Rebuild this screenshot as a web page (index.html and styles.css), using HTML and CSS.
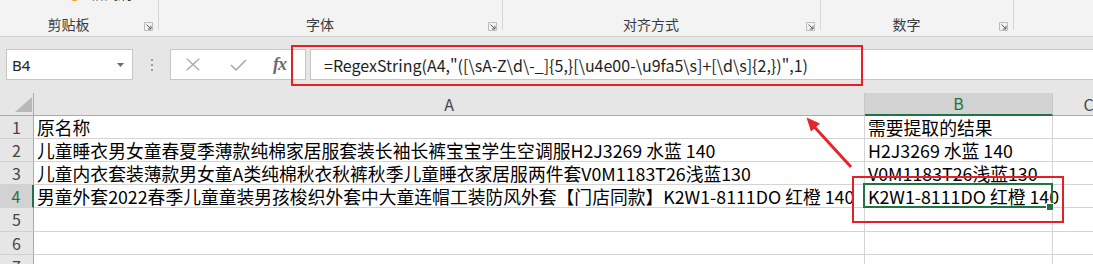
FILE: index.html
```html
<!DOCTYPE html>
<html lang="zh-CN">
<head>
<meta charset="utf-8">
<title>Excel RegexString</title>
<link rel="stylesheet" href="styles.css">
</head>
<body>
<div class="app">
  <div class="ribbon">
    <div class="group g1">
      <div class="clip"><span class="brush"></span><span class="cut">格式刷</span></div>
      <div class="lrow"><div class="glabel">剪贴板</div><svg class="launch" viewBox="0 0 9 9"><path d="M0.5 8.5V0.5H8.5V8.5Z" fill="none" stroke="#bdbdbd"/><path d="M2.5 2.5L7 7M7 3.8V7H3.8" fill="none" stroke="#5f5f5f" stroke-width="1"/></svg></div>
    </div>
    <div class="sep"></div>
    <div class="group g2">
      <div class="clip"></div>
      <div class="lrow"><div class="glabel">字体</div><svg class="launch" viewBox="0 0 9 9"><path d="M0.5 8.5V0.5H8.5V8.5Z" fill="none" stroke="#bdbdbd"/><path d="M2.5 2.5L7 7M7 3.8V7H3.8" fill="none" stroke="#5f5f5f" stroke-width="1"/></svg></div>
    </div>
    <div class="sep"></div>
    <div class="group g3">
      <div class="clip"></div>
      <div class="lrow"><div class="glabel">对齐方式</div><svg class="launch" viewBox="0 0 9 9"><path d="M0.5 8.5V0.5H8.5V8.5Z" fill="none" stroke="#bdbdbd"/><path d="M2.5 2.5L7 7M7 3.8V7H3.8" fill="none" stroke="#5f5f5f" stroke-width="1"/></svg></div>
    </div>
    <div class="sep"></div>
    <div class="group g4">
      <div class="clip"></div>
      <div class="lrow"><div class="glabel">数字</div><svg class="launch" viewBox="0 0 9 9"><path d="M0.5 8.5V0.5H8.5V8.5Z" fill="none" stroke="#bdbdbd"/><path d="M2.5 2.5L7 7M7 3.8V7H3.8" fill="none" stroke="#5f5f5f" stroke-width="1"/></svg></div>
    </div>
    <div class="sep"></div>
    <div class="group g5"></div>
  </div>

  <div class="fbar">
    <div class="namebox"><span class="ref">B4</span><svg class="caret" viewBox="0 0 7 4"><path d="M0 0H7L3.5 4Z" fill="#6b6b6b"/></svg></div>
    <div class="grip"><i></i><i></i><i></i></div>
    <div class="fxbox">
      <svg class="ico-x" viewBox="0 0 14 13"><path d="M0.7 0.7L13.3 12.3M13.3 0.7L0.7 12.3" stroke="#a9a9a9" stroke-width="1.3" fill="none"/></svg>
      <svg class="ico-ok" viewBox="0 0 17 12"><path d="M1 6L6 11L16 1" stroke="#a9a9a9" stroke-width="1.6" fill="none"/></svg>
      <span class="fx">fx</span>
    </div>
    <div class="finput">=RegexString(A4,"([\sA-Z\d\-_]{5,}[\u4e00-\u9fa5\s]+[\d\s]{2,})",1)</div>
  </div>

  <div class="sheet">
    <div class="h corner"><svg viewBox="0 0 33 22" width="33" height="22"><path d="M15 19H32V4Z" fill="#b9b9b9"/></svg></div>
    <div class="h">A</div>
    <div class="h hsel">B</div>
    <div class="h">C</div>

    <div class="rh">1</div>
    <div class="c">原名称</div>
    <div class="c">需要提取的结果</div>
    <div class="c"></div>

    <div class="rh">2</div>
    <div class="c">儿童睡衣男女童春夏季薄款纯棉家居服套装长袖长裤宝宝学生空调服H2J3269 水蓝 140</div>
    <div class="c">H2J3269 水蓝 140</div>
    <div class="c"></div>

    <div class="rh">3</div>
    <div class="c">儿童内衣套装薄款男女童A类纯棉秋衣秋裤秋季儿童睡衣家居服两件套V0M1183T26浅蓝130</div>
    <div class="c">V0M1183T26浅蓝130</div>
    <div class="c"></div>

    <div class="rh rsel">4</div>
    <div class="c">男童外套2022春季儿童童装男孩梭织外套中大童连帽工装防风外套【门店同款】K2W1-8111DO 红橙 140</div>
    <div class="c b4">K2W1-8111DO 红橙 140<span class="handle"></span></div>
    <div class="c"></div>

    <div class="rh">5</div>
    <div class="c"></div>
    <div class="c"></div>
    <div class="c"></div>

    <div class="rh">6</div>
    <div class="c"></div>
    <div class="c"></div>
    <div class="c"></div>

    <div class="rh">7</div>
    <div class="c"></div>
    <div class="c"></div>
    <div class="c"></div>
  </div>

  <div class="redbox rb1"></div>
  <div class="redbox rb2"></div>
  <svg class="arrow" viewBox="0 0 60 65" width="60" height="65">
    <path d="M51 57L14 16.5" stroke="#e2262b" stroke-width="3" fill="none"/>
    <path d="M6.5 7.5L20 13.5L11 21.5Z" fill="#e2262b"/>
  </svg>
</div>
</body>
</html>
```

FILE: styles.css
```css
* { box-sizing: border-box; }
html, body { margin: 0; padding: 0; }
body {
  width: 1093px;
  height: 264px;
  overflow: hidden;
  background: #e6e6e6;
  font-family: "Noto Sans CJK SC", "Noto Sans", sans-serif;
}
.app {
  position: relative;
  width: 1093px;
  height: 264px;
  overflow: hidden;
}

/* Ribbon */
.ribbon {
  display: flex;
  height: 37px;
  background: #f3f3f3;
  border-bottom: 1px solid #d4d4d4;
  overflow: hidden;
}
.group {
  display: flex;
  flex-direction: column;
  justify-content: space-between;
  height: 36px;
  flex: none;
}
.g1 { width: 158px; }
.g2 { width: 343px; }
.g3 { width: 317px; }
.g4 { width: 192px; }
.g5 { flex: 1; }
.sep {
  flex: none;
  width: 1px;
  height: 30px;
  background: #d6d6d6;
}
.clip {
  display: flex;
  align-items: flex-end;
  height: 18px;
  margin-top: -16px;
  font-size: 14px;
  line-height: 18px;
  color: #333;
}
.brush {
  margin-left: 72px;
  width: 5px;
  height: 5px;
  margin-bottom: 1px;
  background: #f0a23a;
  border-radius: 1px;
}
.cut { margin-left: 13px; }
.lrow {
  display: flex;
  align-items: flex-end;
  padding-bottom: 3px;
}
.glabel {
  flex: 1;
  text-align: center;
  font-size: 14px;
  line-height: 18px;
  color: #3b3b3b;
}
.launch {
  flex: none;
  width: 9px;
  height: 9px;
  margin: 0 5px 2px 7px;
}

/* Formula bar */
.fbar {
  display: flex;
  height: 43px;
  padding-top: 12px;
}
.namebox {
  flex: none;
  margin-left: 6px;
  width: 127px;
  height: 31px;
  background: #fff;
  border: 1px solid #c6c6c6;
  display: flex;
  align-items: center;
  justify-content: space-between;
  padding: 0 8px 0 5px;
}
.ref {
  font-family: "Noto Sans", sans-serif;
  font-size: 15px;
  color: #222;
}
.caret { width: 7px; height: 4px; }
.grip {
  flex: none;
  width: 37px;
  height: 31px;
  display: flex;
  flex-direction: column;
  align-items: center;
  justify-content: center;
  gap: 3px;
}
.grip i {
  display: block;
  width: 2px;
  height: 2px;
  background: #9c9c9c;
}
.fxbox {
  flex: none;
  width: 136px;
  height: 31px;
  background: #fff;
  border: 1px solid #c6c6c6;
  display: flex;
  align-items: center;
}
.ico-x { width: 14px; height: 13px; margin-left: 15px; }
.ico-ok { width: 17px; height: 12px; margin-left: 30px; }
.fx {
  margin-left: 26px;
  font-family: "Liberation Serif", serif;
  font-style: italic;
  font-weight: bold;
  font-size: 18px;
  color: #6c6c6c;
  letter-spacing: -1px;
}
.finput {
  flex: 1;
  margin-left: 4px;
  height: 31px;
  background: #fff;
  border: 1px solid #c6c6c6;
  border-right: none;
  padding-left: 13px;
  display: flex;
  align-items: center;
  white-space: nowrap;
  font-size: 16px;
  color: #1e1e1e;
}

/* Sheet */
.sheet {
  margin-top: 13px;
  display: grid;
  grid-template-columns: 34px 831px 188px 72px;
  grid-template-rows: 23px 23px 23px 23px 23px 24px 23px 23px;
}
.h {
  background: #e6e6e6;
  border-right: 1px solid #c8c8c8;
  border-bottom: 1px solid #ababab;
  text-align: center;
  font-size: 16px;
  line-height: 22px;
  color: #444;
}
.corner { border-right: 1px solid #ababab; }
.corner svg { display: block; }
.hsel {
  background: #d2d2d2;
  color: #217346;
  border-bottom: 2px solid #217346;
  line-height: 21px;
}
.rh {
  background: #e6e6e6;
  border-right: 1px solid #ababab;
  border-bottom: 1px solid #d0d0d0;
  text-align: center;
  font-size: 16px;
  line-height: 22px;
  color: #444;
}
.rsel {
  background: #d2d2d2;
  color: #217346;
  border-right: 2px solid #217346;
}
.c {
  background: #fff;
  border-right: 1px solid #d4d4d4;
  border-bottom: 1px solid #d4d4d4;
  padding-left: 3px;
  white-space: nowrap;
  overflow: hidden;
  font-size: 17.8px;
  line-height: 22px;
  color: #000;
}
.b4 {
  position: relative;
  overflow: visible;
  z-index: 1;
}
.b4::after {
  content: "";
  position: absolute;
  top: -2px;
  left: -2px;
  right: -1px;
  bottom: -1px;
  border: 2px solid #217346;
}
.handle {
  position: absolute;
  right: -2px;
  bottom: -4px;
  width: 8px;
  height: 8px;
  background: #217346;
  border: 1px solid #fff;
  z-index: 2;
}

/* Annotations */
.redbox {
  position: absolute;
  border: 2px solid #e61f26;
}
.rb1 { left: 291px; top: 45px; width: 572px; height: 41px; }
.rb2 { left: 852px; top: 176px; width: 212px; height: 47px; }
.arrow {
  position: absolute;
  left: 800px;
  top: 110px;
}
```
